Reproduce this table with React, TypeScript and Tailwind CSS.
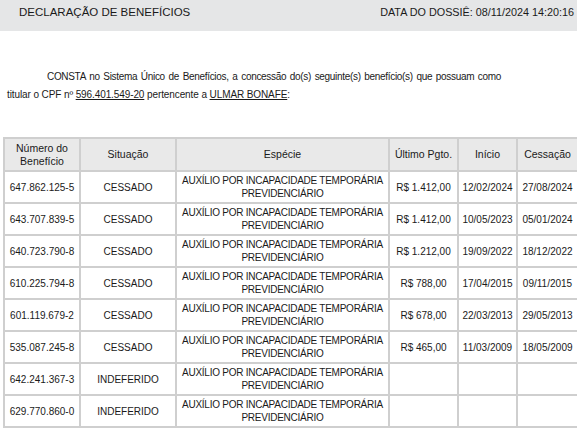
const rows = [
  ["647.862.125-5", "CESSADO", "R$ 1.412,00", "12/02/2024", "27/08/2024"],
  ["643.707.839-5", "CESSADO", "R$ 1.412,00", "10/05/2023", "05/01/2024"],
  ["640.723.790-8", "CESSADO", "R$ 1.212,00", "19/09/2022", "18/12/2022"],
  ["610.225.794-8", "CESSADO", "R$ 788,00", "17/04/2015", "09/11/2015"],
  ["601.119.679-2", "CESSADO", "R$ 678,00", "22/03/2013", "29/05/2013"],
  ["535.087.245-8", "CESSADO", "R$ 465,00", "11/03/2009", "18/05/2009"],
  ["642.241.367-3", "INDEFERIDO", "", "", ""],
  ["629.770.860-0", "INDEFERIDO", "", "", ""],
];

const cell = "border-2 border-[#cfcfcf] text-center align-middle p-0";

export default function App() {
  return (
    <div className="w-[577px] h-[428px] overflow-hidden bg-white text-[#1a1a1a] font-['Liberation_Sans',Arial,sans-serif]">
      <header className="h-[31px] bg-[#e5e6e7] flex items-center justify-between pl-[19px] pr-[3px] pb-[6px]">
        <h1 className="text-[11.5px] leading-none">DECLARAÇÃO DE BENEFÍCIOS</h1>
        <span className="text-[10.8px] leading-none">DATA DO DOSSIÊ: 08/11/2024 14:20:16</span>
      </header>

      <p className="mt-[37px] ml-[7px] w-[494px] text-[10px] leading-[18px] tracking-[-0.32px] text-justify">
        <span className="inline-block w-[40px]" />
        CONSTA no Sistema Único de Benefícios, a concessão do(s) seguinte(s) benefício(s) que possuam como{" "}
        <span className="tracking-[-0.1px]">
          titular o CPF nº <span className="underline">596.401.549-20</span> pertencente a{" "}
          <span className="underline">ULMAR BONAFE</span>:
        </span>
      </p>

      <div className="mt-[33px] pl-[3px]">
        <table className="w-[574px] table-fixed border-collapse text-[10px]">
          <colgroup>
            <col className="w-[76px]" />
            <col className="w-[96px]" />
            <col className="w-[213px]" />
            <col className="w-[69px]" />
            <col className="w-[59px]" />
            <col className="w-[61px]" />
          </colgroup>
          <thead>
            <tr className="h-[33px] bg-[#e9e9e9] text-[10.5px] leading-[13px]">
              <th className={`${cell} font-normal`}>
                Número do
                <br />
                Benefício
              </th>
              <th className={`${cell} font-normal`}>Situação</th>
              <th className={`${cell} font-normal`}>Espécie</th>
              <th className={`${cell} font-normal`}>Último Pgto.</th>
              <th className={`${cell} font-normal`}>Início</th>
              <th className={`${cell} font-normal`}>Cessação</th>
            </tr>
          </thead>
          <tbody>
            {rows.map((r) => (
              <tr key={r[0]} className="h-[32px]">
                <td className={cell}>{r[0]}</td>
                <td className={cell}>{r[1]}</td>
                <td className={`${cell} leading-[13px] tracking-[-0.25px]`}>
                  AUXÍLIO POR INCAPACIDADE TEMPORÁRIA
                  <br />
                  PREVIDENCIÁRIO
                </td>
                <td className={cell}>{r[2]}</td>
                <td className={cell}>{r[3]}</td>
                <td className={cell}>{r[4]}</td>
              </tr>
            ))}
          </tbody>
        </table>
      </div>
    </div>
  );
}
